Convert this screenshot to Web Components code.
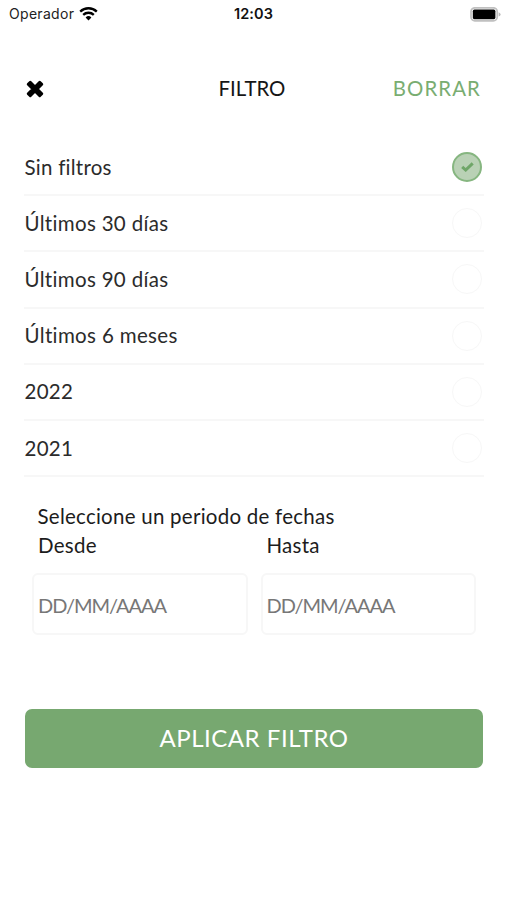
<!DOCTYPE html>
<html lang="es">
<head>
<meta charset="utf-8">
<title>Filtro</title>
<style>
html,body{margin:0;height:100%;background:#fff}
body{font-family:Lato,"Open Sans",sans-serif;color:#212121}
</style>
</head>
<body>
<filter-screen></filter-screen>
<script>
const define = (name, html) => customElements.define(name, class extends HTMLElement {
  connectedCallback() {
    if (this.shadowRoot) return;
    this.attachShadow({ mode: 'open' }).innerHTML = html;
  }
});

define('status-bar', `<style>
:host{display:grid;grid-template-columns:1fr auto 1fr;align-items:center;height:28px;padding:0 6px 0 9px;box-sizing:border-box;font:14px/28px Inter,sans-serif;color:#222}
.left{display:flex;align-items:center;gap:5px}
.op{letter-spacing:.3px}
.time{font-weight:600;color:#111;font-size:14.5px;letter-spacing:.1px;padding-right:3px}
.battery{justify-self:end}
svg{display:block}
</style>
<div class="left"><span class="op">Operador</span>
<svg width="19" height="14" viewBox="0 0 19 14" fill="none" stroke="#000" stroke-width="2.3"><path d="M1.2 4.6a12 12 0 0 1 16.6 0M4.2 7.9a7.6 7.6 0 0 1 10.6 0"/><path d="M9.5 13.4 6.6 10.5a4.2 4.2 0 0 1 5.8 0z" fill="#000" stroke="none"/></svg></div>
<span class="time">12:03</span>
<svg class="battery" width="31" height="15" viewBox="0 0 31 15"><rect x="1" y=".8" width="26.2" height="13" rx="3.8" fill="#fff" stroke="#c0c0c0" stroke-width="1.7"/><rect x="2.8" y="2.6" width="22.6" height="9.6" rx="1.6"/><path d="M28.6 5.2q2 .7 2 2.2t-2 2.2z" fill="#bbb"/></svg>`);

define('filter-header', `<style>
:host{display:grid;grid-template-columns:1fr auto 1fr;align-items:center;height:31px;font-size:20.4px}
svg{display:block;margin:1px 0 0 2px}
span{padding-bottom:2px}
.title{color:#161616}
.clear{justify-self:end;color:#79ad71;letter-spacing:1.1px;margin-right:-1px}
</style>
<svg width="18" height="18" viewBox="0.8 0.9 16.4 16.4"><path d="M4.7 2.9 9 7.2l4.3-4.3 1.9 1.9L10.9 9.1l4.3 4.3-1.9 1.9L9 11l-4.3 4.3-1.9-1.9 4.3-4.3-4.3-4.3z" stroke="#000" stroke-linejoin="round" stroke-width="2.6"/></svg>
<span class="title"><slot></slot></span><span class="clear">BORRAR</span>`);

define('filter-option', `<style>
:host{display:flex;align-items:center;justify-content:space-between;height:56.2px;box-sizing:border-box;border-bottom:2px solid #f7f7f7;padding-right:2px;font-size:20.5px;color:#2b2b2b;letter-spacing:.25px}
.label{padding:0 0 1px .5px}
.mark{width:30px;height:30px;box-sizing:border-box;border:1px solid #f7f7f7;border-radius:50%;display:grid;place-items:center}
svg{display:none}
:host([selected]) .mark{background:#b9d1b5;border:2px solid #86b680}
:host([selected]) svg{display:block}
</style>
<span class="label"><slot></slot></span>
<span class="mark"><svg width="13" height="10" viewBox="0 0 13 10" fill="none" stroke="#6fa668" stroke-width="3"><path d="M1.2 4.8 4.7 8 11.7 1.3"/></svg></span>`);

define('date-field', `<style>
:host{display:block}
label{display:block;padding-left:6px;font-size:20.5px;line-height:28px;padding-bottom:2px;color:#1c1c1c;letter-spacing:.25px}
.box{height:62px;margin-top:12px;box-sizing:border-box;border:2px solid #f7f7f7;border-radius:6px;padding:2px 0 0 4px;display:flex;align-items:center;font-size:20px;color:#777;letter-spacing:-1.05px}
</style>
<label><slot></slot></label><div class="box"><span>DD/MM/AAAA</span></div>`);

define('date-range', `<style>
:host{display:block;padding:0 8px}
.heading{padding-left:5.5px;font-size:20.5px;line-height:29px;color:#1c1c1c;letter-spacing:.25px}
.fields{display:grid;grid-template-columns:1fr 1fr;gap:13px}
</style>
<div class="heading"><slot></slot></div>
<div class="fields"><date-field>Desde</date-field><date-field>Hasta</date-field></div>`);

define('apply-button', `<style>
:host{display:flex;align-items:center;justify-content:center;height:59px;border-radius:7px;background:#77a870;color:#fff;font-size:24px;letter-spacing:.52px}
span{padding-bottom:2px}
</style><span><slot></slot></span>`);

define('filter-screen', `<style>
:host{display:block;height:900px;overflow:hidden}
main{display:flex;flex-direction:column;padding:0 23px 0 24px}
filter-header{margin-top:45px;padding-right:4px}
.options{margin-top:36px}
date-range{margin-top:25px}
apply-button{margin:74px 1px 0}
</style>
<status-bar></status-bar>
<main><filter-header>FILTRO</filter-header>
<div class="options"><filter-option selected>Sin filtros</filter-option><filter-option style="letter-spacing:.32px">Últimos 30 días</filter-option><filter-option style="letter-spacing:.32px">Últimos 90 días</filter-option><filter-option style="letter-spacing:.35px">Últimos 6 meses</filter-option><filter-option>2022</filter-option><filter-option>2021</filter-option></div>
<date-range>Seleccione un periodo de fechas</date-range>
<apply-button>APLICAR FILTRO</apply-button></main>`);
</script>
</body>
</html>
